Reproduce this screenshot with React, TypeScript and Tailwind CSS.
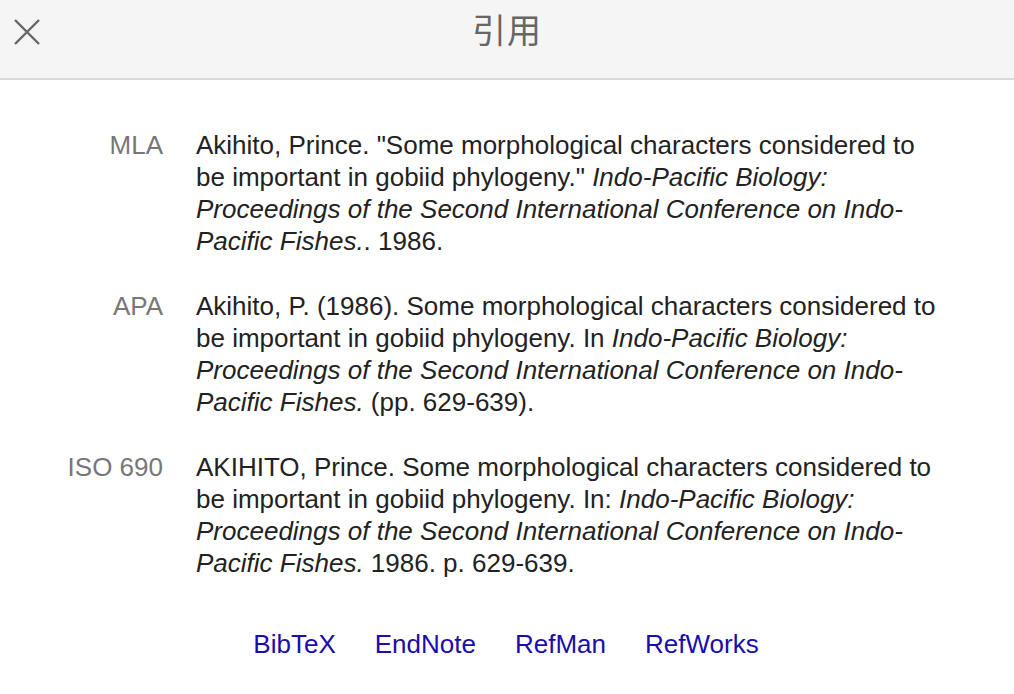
export default function App() {
    const citations = [
        {
            label: 'MLA',
            body: (
                <>
                    Akihito, Prince. "Some morphological characters considered to be important in gobiid phylogeny."{' '}
                    <i>Indo-Pacific Biology: Proceedings of the Second International Conference on Indo-Pacific Fishes.</i>. 1986.
                </>
            ),
        },
        {
            label: 'APA',
            body: (
                <>
                    Akihito, P. (1986). Some morphological characters considered to be important in gobiid phylogeny. In{' '}
                    <i>Indo-Pacific Biology: Proceedings of the Second International Conference on Indo-Pacific Fishes.</i> (pp. 629-639).
                </>
            ),
        },
        {
            label: 'ISO 690',
            body: (
                <>
                    AKIHITO, Prince. Some morphological characters considered to be important in gobiid phylogeny. In:{' '}
                    <i>Indo-Pacific Biology: Proceedings of the Second International Conference on Indo-Pacific Fishes.</i> 1986. p. 629-639.
                </>
            ),
        },
    ]

    return (
        <div className="min-h-screen bg-white" style={{ fontFamily: '"Liberation Sans", Arial, "Noto Sans CJK SC", sans-serif' }}>
            <header className="relative h-[80px] bg-[#f5f5f5] border-b-2 border-[#d9d9d9] flex items-center justify-center">
                <button className="absolute left-[14px] top-[19px] w-[26px] h-[26px]">
                    <svg viewBox="0 0 26 26" width="26" height="26" fill="none" stroke="#666" strokeWidth="2.4">
                        <path d="M1 1L25 25M25 1L1 25" />
                    </svg>
                </button>
                <h1 className="text-[34px] leading-none text-[#666] tracking-[1px] -mt-[20px]" style={{ fontFamily: '"Noto Sans CJK SC", sans-serif' }}>引用</h1>
            </header>

            <main className="pt-[49px] pl-[60px] flex flex-col gap-[33px]">
                {citations.map((c) => (
                    <div key={c.label} className="flex gap-[33px]">
                        <div className="w-[103px] text-right text-[26px] leading-[32px] text-[#777]">{c.label}</div>
                        <div className="w-[740px] text-[26px] leading-[32px] text-[#222]">{c.body}</div>
                    </div>
                ))}
            </main>

            <nav className="mt-[49px] pr-[2px] flex justify-center gap-[39px] text-[26px] leading-[32px] text-[#1a0dab]">
                <a href="#">BibTeX</a>
                <a href="#">EndNote</a>
                <a href="#">RefMan</a>
                <a href="#">RefWorks</a>
            </nav>
        </div>
    )
}
